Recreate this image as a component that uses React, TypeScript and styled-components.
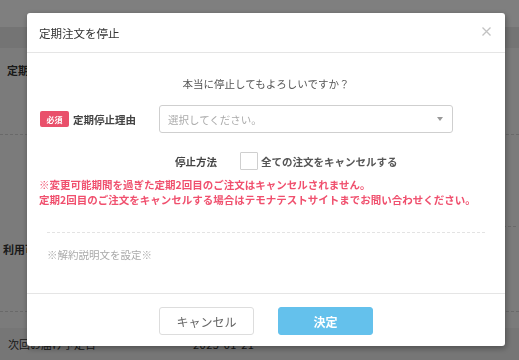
import React from "react";
import styled, { createGlobalStyle } from "styled-components";

const GlobalStyle = createGlobalStyle`
  body {
    margin: 0;
    font-family: "Noto Sans CJK JP", "Noto Sans", sans-serif;
  }
`;

const Page = styled.div`
  width: 519px;
  height: 360px;
  overflow: hidden;
  background: #f7f7f7;
  display: flex;
  flex-direction: column;
`;

const TopBar = styled.div`
  height: 27px;
  background: #ffffff;
`;

const SubBar = styled.div`
  height: 21px;
  background: #e9e9e9;
`;

const Section = styled.div<{ $h: number; $pad: string }>`
  height: ${(p) => p.$h}px;
  padding: ${(p) => p.$pad};
  box-sizing: border-box;
  border-bottom: 1px dashed #d2d2d2;
`;

const SectionLabel = styled.div<{ $top?: number }>`
  padding-top: ${(p) => p.$top ?? 0}px;
  font-size: 11px;
  line-height: 16px;
  font-weight: bold;
  color: #333;
`;

const InnerRule = styled.div`
  height: 91px;
  margin-left: 400px;
  border-bottom: 1px dashed #d2d2d2;
`;

const Gap = styled.div`
  height: 16px;
`;

const BottomBar = styled.div`
  flex: 1;
  background: #ececec;
  display: flex;
  align-items: center;
  padding: 0 8px;
  font-size: 11px;
  color: #333;
`;

const DateText = styled.span`
  margin-left: 97px;
  letter-spacing: 0.5px;
`;

const Overlay = styled.div`
  position: fixed;
  inset: 0;
  background: rgba(0, 0, 0, 0.5);
  padding: 13px 0 0 27px;
`;

const Modal = styled.div`
  width: 478px;
  height: 333px;
  background: #fff;
  border-radius: 3px;
  box-shadow: 1px 2px 6px rgba(0, 0, 0, 0.35);
  display: flex;
  flex-direction: column;
`;

const Header = styled.div`
  height: 39px;
  border-bottom: 1px solid #e5e5e5;
  display: flex;
  align-items: center;
  justify-content: space-between;
  padding: 0 14px 0 12px;
`;

const Title = styled.span`
  font-size: 11.5px;
  color: #333;
`;

const CloseButton = styled.span`
  display: flex;
  width: 9px;
  height: 9px;
  margin-top: -2px;
`;

const Body = styled.div`
  flex: 1;
  padding: 23px 12px 0;
`;

const Question = styled.div`
  text-align: center;
  font-size: 10.5px;
  line-height: 16px;
  color: #555;
`;

const FieldRow = styled.div`
  display: flex;
  align-items: center;
  margin-top: 13px;
`;

const LabelCol = styled.div`
  width: 120px;
  padding-left: 1px;
  box-sizing: border-box;
  display: flex;
  align-items: center;
  gap: 4px;
`;

const Badge = styled.span`
  width: 29px;
  height: 16px;
  border-radius: 2px;
  background: #e9506b;
  color: #fff;
  font-size: 8px;
  font-weight: bold;
  display: flex;
  align-items: center;
  justify-content: center;
`;

const FieldLabel = styled.span`
  font-size: 10.5px;
  font-weight: bold;
  color: #444;
`;

const Select = styled.div`
  width: 294px;
  height: 28px;
  box-sizing: border-box;
  border: 1px solid #cfcfcf;
  border-radius: 3px;
  display: flex;
  align-items: center;
  justify-content: space-between;
  padding: 0 9px 0 8px;
`;

const Placeholder = styled.span`
  font-size: 10.5px;
  color: #aaa;
`;

const Caret = styled.span`
  width: 0;
  height: 0;
  border-left: 3.5px solid transparent;
  border-right: 3.5px solid transparent;
  border-top: 4px solid #999;
`;

const MethodRow = styled.div`
  display: flex;
  align-items: center;
  margin-top: 19px;
  padding-left: 136px;
  height: 18px;
`;

const MethodLabel = styled.span`
  font-size: 10.5px;
  font-weight: bold;
  color: #444;
  margin-right: 23px;
`;

const CheckBox = styled.span`
  width: 18px;
  height: 18px;
  box-sizing: border-box;
  border: 1px solid #cfcfcf;
  border-radius: 1px;
  margin-right: 3px;
`;

const CheckText = styled.span`
  font-size: 10.5px;
  font-weight: bold;
  color: #555;
`;

const Notice = styled.div`
  margin-top: 7px;
  font-size: 10.5px;
  line-height: 15px;
  font-weight: bold;
  color: #f0506e;
`;

const Divider = styled.div`
  margin: 25px 8px 0;
  border-top: 1px dashed #e3e3e3;
`;

const Note = styled.div`
  margin: 14px 8px 0;
  font-size: 10.5px;
  line-height: 16px;
  color: #aaa;
`;

const Footer = styled.div`
  height: 53px;
  box-sizing: border-box;
  border-top: 1px solid #e5e5e5;
  display: flex;
  justify-content: center;
  gap: 24px;
  padding-top: 13px;
`;

const Button = styled.button<{ $primary?: boolean }>`
  width: 95px;
  height: 28px;
  border-radius: 3px;
  font-family: inherit;
  font-size: 12px;
  cursor: pointer;
  border: 1px solid ${(p) => (p.$primary ? "#64c1ec" : "#dddddd")};
  background: ${(p) => (p.$primary ? "#64c1ec" : "#ffffff")};
  color: ${(p) => (p.$primary ? "#ffffff" : "#666666")};
  font-weight: ${(p) => (p.$primary ? "bold" : "normal")};
`;

function CloseIcon() {
  return (
    <svg width="9" height="9" viewBox="0 0 9 9">
      <path d="M0.5 0.5 L8.5 8.5 M8.5 0.5 L0.5 8.5" stroke="#c2c2c2" strokeWidth="1.3" />
    </svg>
  );
}

export default function App() {
  return (
    <>
      <GlobalStyle />
      <Page>
        <TopBar />
        <SubBar />
        <Section $h={87} $pad="14px 7px 0">
          <SectionLabel>定期便</SectionLabel>
        </Section>
        <Section $h={177} $pad="0 3px 0 3px">
          <InnerRule />
          <SectionLabel $top={14}>利用可能</SectionLabel>
        </Section>
        <Gap />
        <BottomBar>
          次回お届け予定日
          <DateText>2025-01-21</DateText>
        </BottomBar>
      </Page>
      <Overlay>
        <Modal>
          <Header>
            <Title>定期注文を停止</Title>
            <CloseButton>
              <CloseIcon />
            </CloseButton>
          </Header>
          <Body>
            <Question>本当に停止してもよろしいですか？</Question>
            <FieldRow>
              <LabelCol>
                <Badge>必須</Badge>
                <FieldLabel>定期停止理由</FieldLabel>
              </LabelCol>
              <Select>
                <Placeholder>選択してください。</Placeholder>
                <Caret />
              </Select>
            </FieldRow>
            <MethodRow>
              <MethodLabel>停止方法</MethodLabel>
              <CheckBox />
              <CheckText>全ての注文をキャンセルする</CheckText>
            </MethodRow>
            <Notice>
              ※変更可能期間を過ぎた定期2回目のご注文はキャンセルされません。
              <br />
              定期2回目のご注文をキャンセルする場合はテモナテストサイトまでお問い合わせください。
            </Notice>
            <Divider />
            <Note>※解約説明文を設定※</Note>
          </Body>
          <Footer>
            <Button>キャンセル</Button>
            <Button $primary>決定</Button>
          </Footer>
        </Modal>
      </Overlay>
    </>
  );
}
